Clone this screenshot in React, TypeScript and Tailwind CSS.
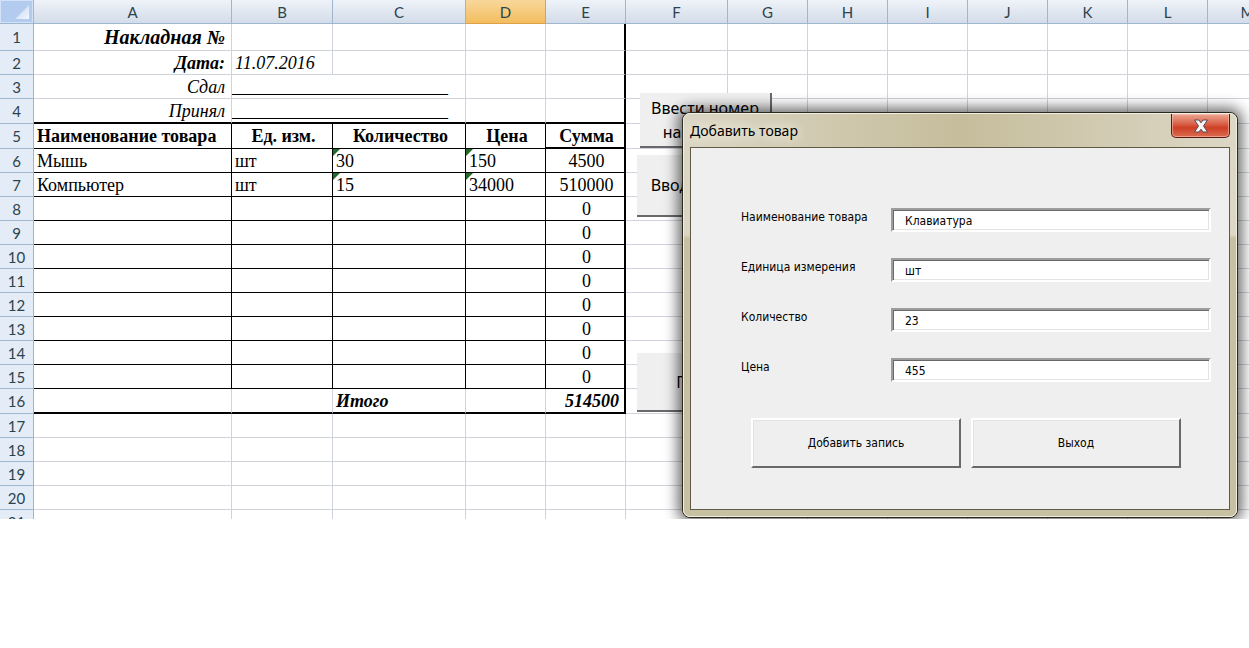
import type { ReactNode } from "react";
import clsx from "clsx";

const columns = [
    { name: "A", width: "w-[198px]" },
    { name: "B", width: "w-[101px]" },
    { name: "C", width: "w-[133px]" },
    { name: "D", width: "w-[80px]" },
    { name: "E", width: "w-[80px]" },
    { name: "F", width: "w-[102px]" },
    { name: "G", width: "w-[80px]" },
    { name: "H", width: "w-[80px]" },
    { name: "I", width: "w-[80px]" },
    { name: "J", width: "w-[80px]" },
    { name: "K", width: "w-[80px]" },
    { name: "L", width: "w-[80px]" },
    { name: "M", width: "w-[80px]" },
];

const items = [
    { name: "Мышь", unit: "шт", count: "30", price: "150", sum: "4500" },
    { name: "Компьютер", unit: "шт", count: "15", price: "34000", sum: "510000" },
    ...Array.from({ length: 8 }, () => ({ name: "", unit: "", count: "", price: "", sum: "0" })),
];

const fields = [
    { id: "name", label: "Наименование товара", value: "Клавиатура" },
    { id: "unit", label: "Единица измерения", value: "шт" },
    { id: "count", label: "Количество", value: "23" },
    { id: "price", label: "Цена", value: "455" },
];

const thin = "border-r border-b border-r-black border-b-black";
const grid = "border-r border-b border-[#ced3dc]";
const lastColumn = "border-r-2 border-r-black";

function Cell({ className, span, children }: { className?: string; span?: number; children?: ReactNode }) {
    return (
        <td colSpan={span} className={clsx("relative overflow-hidden whitespace-nowrap p-0 leading-5", !span && "pl-[3px]", className)}>
            {children}
        </td>
    );
}

function Row({ n, height = "h-6", blanks = 8, children }: { n: number; height?: string; blanks?: number; children?: ReactNode }) {
    return (
        <tr className={height}>
            <th
                scope="row"
                className="border-r border-b border-[#9eb6ce] bg-[#e4ecf7] p-0 text-center font-['Lato',sans-serif] text-[15px] leading-5 font-normal text-[#2c434e]"
            >
                {n}
            </th>
            {children}
            {Array.from({ length: blanks }, (_, i) => (
                <Cell key={i} className={grid} />
            ))}
        </tr>
    );
}

// small green corner: number stored as text
function TextMark() {
    return (
        <svg className="absolute top-0 left-0 h-[7px] w-[7px]" viewBox="0 0 7 7">
            <path d="M0 0h7L0 7z" fill="#1f6b2a" />
        </svg>
    );
}

function Sheet() {
    return (
        <table className="w-[1288px] table-fixed border-separate border-spacing-0 font-['Liberation_Serif',serif] text-lg text-black">
            <thead>
                <tr className="h-6 font-['Lato',sans-serif] text-[15px] leading-5 text-[#2c434e]">
                    <th className="w-[34px] border-r border-b border-[#9eb6ce] bg-[#b3cbee] p-0">
                        <svg className="h-[23px] w-[33px]" viewBox="0 0 33 23">
                            <defs>
                                <linearGradient id="corner" x1="0" y1="0" x2="1" y2="1">
                                    <stop offset="0.3" stopColor="#c9daf3" />
                                    <stop offset="1" stopColor="#f7faff" />
                                </linearGradient>
                            </defs>
                            <path d="M0.500 22.500v-22h32v22z" fill="none" stroke="#d3e2f7" />
                            <path d="M29 5v14H15z" fill="url(#corner)" />
                        </svg>
                    </th>
                    {columns.map((c) => (
                        <th
                            key={c.name}
                            scope="col"
                            className={clsx(
                                "border-r border-b p-0 font-normal",
                                c.width,
                                c.name === "D"
                                    ? "border-[#e0a04a] bg-linear-to-b from-[#f8d79b] to-[#f2bd5c]"
                                    : "border-[#9eb6ce] bg-linear-to-b from-[#eff3f9] to-[#d3dce9]",
                            )}
                        >
                            {c.name}
                        </th>
                    ))}
                </tr>
            </thead>
            <tbody>
                <Row n={1} height="h-[27px]">
                    <Cell className={clsx(grid, "pr-[6px] text-right text-xl font-bold italic")}>Накладная №</Cell>
                    <Cell className={grid} />
                    <Cell className={grid} />
                    <Cell className={grid} />
                    <Cell className={clsx(grid, lastColumn)} />
                </Row>
                <Row n={2}>
                    <Cell className={clsx(grid, "pr-[6px] text-right font-bold italic")}>Дата:</Cell>
                    <Cell className={clsx(grid, "italic")}>11.07.2016</Cell>
                    <Cell className={grid} />
                    <Cell className={grid} />
                    <Cell className={clsx(grid, lastColumn)} />
                </Row>
                <Row n={3}>
                    <Cell className={clsx(grid, "pr-[6px] text-right italic")}>Сдал</Cell>
                    <Cell span={2} className={grid}>________________________</Cell>
                    <Cell className={grid} />
                    <Cell className={clsx(grid, lastColumn)} />
                </Row>
                <Row n={4} height="h-[25px]">
                    <Cell className={clsx(grid, "border-b-2 border-b-black pr-[6px] text-right italic")}>Принял</Cell>
                    <Cell span={2} className={clsx(grid, "border-b-2 border-b-black")}>________________________</Cell>
                    <Cell className={clsx(grid, "border-b-2 border-b-black")} />
                    <Cell className={clsx(grid, lastColumn, "border-b-2 border-b-black")} />
                </Row>
                <Row n={5} height="h-[25px]">
                    <Cell className={clsx(thin, "font-bold")}>Наименование товара</Cell>
                    <Cell className={clsx(thin, "text-center font-bold")}>Ед. изм.</Cell>
                    <Cell className={clsx(thin, "text-center font-bold")}>Количество</Cell>
                    <Cell className={clsx(thin, "text-center font-bold")}>Цена</Cell>
                    <Cell className="border-r-2 border-b-2 border-black text-center font-bold">Сумма</Cell>
                </Row>
                {items.map((item, i) => (
                    <Row key={i} n={i + 6}>
                        <Cell className={thin}>{item.name}</Cell>
                        <Cell className={thin}>{item.unit}</Cell>
                        <Cell className={thin}>
                            {item.count && <TextMark />}
                            {item.count}
                        </Cell>
                        <Cell className={thin}>
                            {item.price && <TextMark />}
                            {item.price}
                        </Cell>
                        <Cell className={clsx(thin, lastColumn, "text-center")}>{item.sum}</Cell>
                    </Row>
                ))}
                <Row n={16} height="h-[25px]">
                    <Cell className={clsx(grid, "border-b-2 border-b-black")} />
                    <Cell className={clsx(grid, "border-b-2 border-b-black")} />
                    <Cell className={clsx(grid, "border-b-2 border-b-black font-bold italic")}>Итого</Cell>
                    <Cell className={clsx(grid, "border-b-2 border-b-black")} />
                    <Cell className="border-r-2 border-b-2 border-black pr-[5px] text-right font-bold italic">514500</Cell>
                </Row>
                {[17, 18, 19, 20, 21].map((n) => (
                    <Row key={n} n={n} blanks={13} />
                ))}
            </tbody>
        </table>
    );
}

function SheetButton({ className, children }: { className: string; children: ReactNode }) {
    return (
        <button
            type="button"
            className={clsx(
                "absolute border-r-2 border-b-2 border-[#696969] bg-[#efefef] text-center font-['Noto_Sans',sans-serif] text-base leading-6 text-black",
                className,
            )}
        >
            {children}
        </button>
    );
}

function AddItemDialog() {
    return (
        <section
            role="dialog"
            aria-labelledby="dialog-title"
            className="absolute top-[112px] left-[682px] w-[556px] rounded-lg border border-[#2b2820] bg-[#c8c0a2] bg-linear-to-r from-[#dbd6c4] via-[#c6bd9c] to-[#ddd7c6] shadow-[0_0_14px_4px_rgba(0,0,0,0.6)]"
        >
            <div className="rounded-[7px] border border-[#f1eee2] bg-linear-to-b from-transparent from-30% to-[#c8c0a2] to-31% px-[6px] pb-[6px]">
                <header className="flex h-[33px] items-start justify-between">
                    <h1
                        id="dialog-title"
                        className="pt-[7px] font-['Noto_Sans',sans-serif] text-sm leading-5 text-black [text-shadow:0_0_8px_#f4f1e6,0_0_14px_#f4f1e6]"
                    >
                        Добавить товар
                    </h1>
                    <button
                        type="button"
                        aria-label="Закрыть"
                        className="flex h-6 w-[59px] items-center justify-center rounded-b-[5px] border border-t-0 border-[#5a1a12] bg-linear-to-b from-[#eba793] from-0% via-[#cf3f25] via-60% to-[#dc6b50] shadow-[inset_0_0_0_1px_rgba(255,210,195,0.5)]"
                    >
                        <svg className="h-[14px] w-4" viewBox="0 0 16 14">
                            <path
                                d="M1.500 1h4.500L8 3.800 10 1h4.500L10.500 7l4 6H10L8 10.200 6 13H1.500l4-6z"
                                fill="#f6f6f6"
                                stroke="#5d4a52"
                                strokeWidth="1"
                                strokeLinejoin="round"
                            />
                        </svg>
                    </button>
                </header>
                <form
                    className="border border-[#5f5946] bg-[#efefef] pt-[60px] pr-[18px] pb-[41px] pl-[50px] font-['DejaVu_Sans_Condensed','DejaVu_Sans',sans-serif] text-xs text-black"
                    onSubmit={(e) => e.preventDefault()}
                >
                    <div className="flex flex-col gap-[26px]">
                        {fields.map((f) => (
                            <div key={f.id} className="flex h-6 items-start">
                                <label htmlFor={f.id} className="w-[150px] shrink-0 leading-[18px]">
                                    {f.label}
                                </label>
                                <input
                                    id={f.id}
                                    type="text"
                                    defaultValue={f.value}
                                    className="h-6 min-w-0 flex-1 border-2 border-t-[#9d9d9d] border-r-white border-b-white border-l-[#9d9d9d] bg-white px-3 pt-[2px] shadow-[inset_1px_1px_0_#696969,inset_-1px_-1px_0_#e3e3e3] outline-none"
                                />
                            </div>
                        ))}
                    </div>
                    <div className="mt-9 ml-[10px] flex gap-[10px]">
                        {["Добавить запись", "Выход"].map((text) => (
                            <button
                                key={text}
                                type="button"
                                className="h-[50px] w-[210px] border-2 border-t-white border-r-[#696969] border-b-[#696969] border-l-white shadow-[inset_1px_1px_0_#e3e3e3]"
                            >
                                {text}
                            </button>
                        ))}
                    </div>
                </form>
            </div>
        </section>
    );
}

export default function App() {
    return (
        <main className="min-h-screen bg-white">
            <div className="relative max-h-[519px] overflow-hidden">
                <Sheet />
                <SheetButton className="top-[93px] left-[640px] h-[55px] w-[132px]">
                    Ввести номер
                    <br />
                    накладной
                </SheetButton>
                <SheetButton className="top-[155px] left-[637px] h-[62px] w-[135px]">Ввод товаров</SheetButton>
                <SheetButton className="top-[353px] left-[637px] h-[59px] w-[135px]">Печать</SheetButton>
                <AddItemDialog />
            </div>
        </main>
    );
}
